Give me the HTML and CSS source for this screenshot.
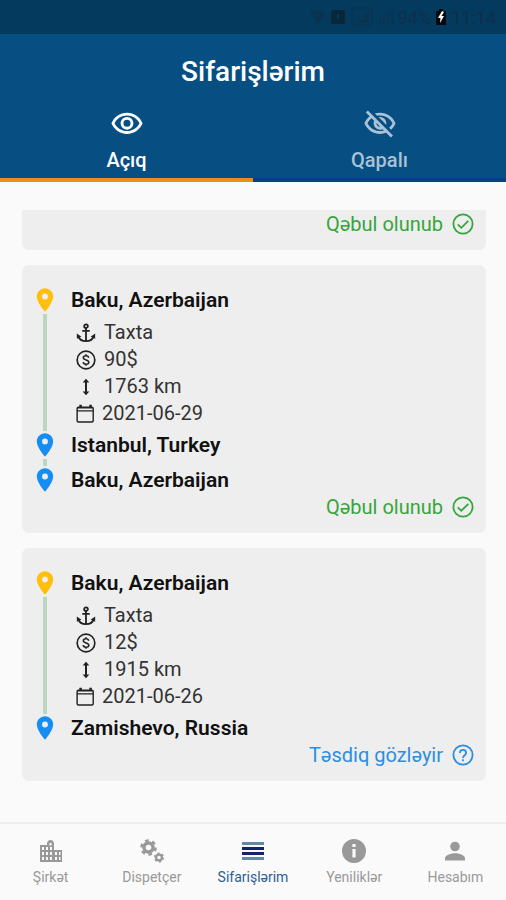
FILE: index.html
```html
<!DOCTYPE html>
<html lang="az">
<head>
<meta charset="utf-8">
<meta name="viewport" content="width=device-width, initial-scale=1">
<title>Sifarişlərim</title>
<link rel="stylesheet" href="styles.css">
</head>
<body>
<svg class="sprite" aria-hidden="true">
  <symbol id="pin" viewBox="0 0 24 24"><path d="M12 2C8.130 2 5 5.130 5 9c0 5.250 7 13 7 13s7-7.750 7-13c0-3.870-3.130-7-7-7zm0 9.500a2.500 2.500 0 0 1 0-5 2.500 2.500 0 0 1 0 5z"/></symbol>
  <symbol id="anchor" viewBox="0 0 24 24"><g fill="none" stroke="currentColor" stroke-width="2.200"><circle cx="12" cy="3.800" r="2.200"/><path d="M12 6v16M7.500 9.500h9M2.800 15.500c1 4 5 6.200 9.200 6.200s8.200-2.200 9.200-6.200"/></g><path d="M1 12.500 6.500 16.500 1 19zM23 12.500 17.500 16.500 23 19z"/></symbol>
  <symbol id="coin" viewBox="0 0 24 24"><g fill="none" stroke="currentColor"><circle cx="12" cy="12" r="10.600" stroke-width="2"/><path stroke-width="1.800" d="M12 5v2m0 10v2M15.300 9.300C15 7.800 13.700 7 12 7c-1.900 0-3.200 1-3.200 2.400 0 3.400 6.600 1.800 6.600 5.200 0 1.500-1.500 2.400-3.400 2.400-1.800 0-3.200-.9-3.400-2.500"/></g></symbol>
  <symbol id="height" viewBox="0 0 24 24"><path d="M13.200 6.500H16L12 2 8 6.500h2.800v11H8l4 4.500 4-4.500h-2.800z"/></symbol>
  <symbol id="calendar" viewBox="0 0 24 24"><path d="M4 1h3v2h9V1h3v2a2.500 2.500 0 0 1 2.500 2.500V20a2.500 2.500 0 0 1-2.500 2.500H3A2.500 2.500 0 0 1 .5 20V5.500A2.500 2.500 0 0 1 3 3h1zM2.200 9v10.500c0 .8.500 1.300 1.300 1.300h15c.8 0 1.300-.5 1.300-1.300V9zm0-3.500v2h17.600v-2z"/></symbol>
  <symbol id="check" viewBox="0 0 24 24"><g fill="none" stroke="currentColor" stroke-width="1.800"><circle cx="12" cy="12" r="9.600"/><path d="m6.800 12.300 3.500 3.500 7-7"/></g></symbol>
  <symbol id="question" viewBox="0 0 24 24"><g fill="none" stroke="currentColor" stroke-width="1.800"><circle cx="12" cy="12" r="9.600"/><path d="M8.900 10c0-1.800 1.300-3.100 3.100-3.100s3.100 1.300 3.100 3c0 2.200-3.100 2.500-3.100 5M12 16.200v2"/></g></symbol>
</svg>

<div class="statusbar">
  <svg class="st-wifi" viewBox="0 0 16 16"><path d="M8 15 0 4.500C4.500 1 11.500 1 16 4.500z"/></svg>
  <svg class="st-box" viewBox="0 0 16 16"><path fill-rule="evenodd" d="M3 1h10a2 2 0 0 1 2 2v10a2 2 0 0 1-2 2H3a2 2 0 0 1-2-2V3a2 2 0 0 1 2-2zm4 4v5h2V5z"/></svg>
  <svg class="st-sim" viewBox="0 0 24 20"><path fill="none" stroke="currentColor" d="M2 1h20v17H2z"/><path d="M19 5v11H7z"/></svg>
  <svg class="st-bars" viewBox="0 0 16 16"><path d="M1 12h2v4H1zM5 9h2v7H5zM9 5h2v11H9zM13 1h2v15h-2z"/></svg>
  <span>94%</span>
  <svg class="st-battery" viewBox="0 0 12 16"><path d="M4 0h4v2h3v14H1V2h3z"/><path fill="#fff" d="M7 2 3 9h2.500L5 14l4-7H6.500L9 3z"/></svg>
  <span>11:14</span>
</div>

<header class="header">
  <h1>Sifarişlərim</h1>
  <nav class="tabs" aria-label="Sifariş növü">
    <button class="tab active" type="button">
      <svg viewBox="0 0 24 24"><path d="M12 6c3.790 0 7.170 2.130 8.820 5.500C19.170 14.870 15.790 17 12 17s-7.170-2.130-8.820-5.500C4.830 8.130 8.210 6 12 6m0-2C7 4 2.730 7.110 1 11.500 2.730 15.890 7 19 12 19s9.270-3.110 11-7.500C21.270 7.110 17 4 12 4zm0 5a2.500 2.500 0 0 1 0 5 2.500 2.500 0 0 1 0-5m0-2c-2.480 0-4.500 2.020-4.500 4.500S9.520 16 12 16s4.500-2.020 4.500-4.500S14.480 7 12 7z"/></svg>
      <span>Açıq</span>
    </button>
    <button class="tab" type="button">
      <svg viewBox="0 0 24 24"><path d="M12 6c3.790 0 7.170 2.130 8.820 5.500-.59 1.220-1.420 2.270-2.410 3.120l1.410 1.410c1.390-1.230 2.490-2.770 3.180-4.530C21.270 7.110 17 4 12 4c-1.270 0-2.490.2-3.640.57l1.650 1.650C10.660 6.090 11.320 6 12 6zm-1.070 1.140L13 9.210c.57.25 1.030.71 1.280 1.280l2.070 2.070c.08-.34.14-.7.14-1.070C16.500 9.010 14.480 7 12 7c-.37 0-.72.05-1.070.14zM2.010 3.870l2.680 2.680C3.060 7.830 1.770 9.530 1 11.500 2.730 15.890 7 19 12 19c1.520 0 2.980-.29 4.320-.82l3.420 3.420 1.410-1.410L3.420 2.450zm7.500 7.500 2.610 2.610c-.04.01-.08.020-.12.020-1.380 0-2.500-1.120-2.500-2.500 0-.05.01-.08.010-.13zm-3.400-3.400 1.750 1.750c-.23.55-.36 1.150-.36 1.780 0 2.480 2.020 4.500 4.500 4.500.63 0 1.230-.13 1.770-.36l.98.98c-.88.24-1.800.38-2.750.38-3.790 0-7.170-2.130-8.820-5.500.7-1.430 1.720-2.610 2.930-3.530z"/></svg>
      <span>Qapalı</span>
    </button>
  </nav>
</header>

<main class="orders">
  <article class="card partial">
    <p class="status ok">Qəbul olunub <svg><use href="#check"/></svg></p>
  </article>

  <article class="card">
    <ol class="route">
      <li class="stop start">
        <div class="rail"><svg><use href="#pin"/></svg></div>
        <div class="place">
          <h2>Baku, Azerbaijan</h2>
          <ul class="details">
            <li><svg><use href="#anchor"/></svg>Taxta</li>
            <li><svg><use href="#coin"/></svg>90$</li>
            <li><svg><use href="#height"/></svg>1763 km</li>
            <li class="date"><svg><use href="#calendar"/></svg>2021-06-29</li>
          </ul>
        </div>
      </li>
      <li class="stop">
        <div class="rail"><svg><use href="#pin"/></svg></div>
        <div class="place"><h2>Istanbul, Turkey</h2></div>
      </li>
      <li class="stop">
        <div class="rail"><svg><use href="#pin"/></svg></div>
        <div class="place"><h2>Baku, Azerbaijan</h2></div>
      </li>
    </ol>
    <p class="status ok">Qəbul olunub <svg><use href="#check"/></svg></p>
  </article>

  <article class="card">
    <ol class="route">
      <li class="stop start">
        <div class="rail"><svg><use href="#pin"/></svg></div>
        <div class="place">
          <h2>Baku, Azerbaijan</h2>
          <ul class="details">
            <li><svg><use href="#anchor"/></svg>Taxta</li>
            <li><svg><use href="#coin"/></svg>12$</li>
            <li><svg><use href="#height"/></svg>1915 km</li>
            <li class="date"><svg><use href="#calendar"/></svg>2021-06-26</li>
          </ul>
        </div>
      </li>
      <li class="stop">
        <div class="rail"><svg><use href="#pin"/></svg></div>
        <div class="place"><h2>Zamishevo, Russia</h2></div>
      </li>
    </ol>
    <p class="status waiting">Təsdiq gözləyir <svg><use href="#question"/></svg></p>
  </article>
</main>

<nav class="bottombar" aria-label="Əsas menyu">
  <a href="#sirket">
    <svg viewBox="0 0 24 24"><path fill-rule="evenodd" d="M1 6h7V4.500C8 2.500 9.700 1 11.500 1S15 2.500 15 4.500V11h8v12H1zm2 2v3h2V8zm4 0v3h2V8zm3.500-4v2.500h2V4zm.5 4v3h2V8zm-8 5v3h2v-3zm4 0v3h2v-3zm4 0v3h2v-3zm5 0v3h2v-3zm4 0v3h1.500v-3zM3 18v3h2v-3zm4 0v3h2v-3zm4 0v3h2v-3zm5 0v3h2v-3zm4 0v3h1.500v-3z"/></svg>
    Şirkət
  </a>
  <a href="#dispetcer">
    <svg viewBox="0 0 24 24"><g fill="none" stroke="currentColor"><circle cx="8.500" cy="8.500" r="4.500" stroke-width="3.400"/><circle cx="8.500" cy="8.500" r="7" stroke-width="2.600" stroke-dasharray="3.670 3.660"/><circle cx="19" cy="18.500" r="2.900" stroke-width="2.200"/><circle cx="19" cy="18.500" r="4.300" stroke-width="1.600" stroke-dasharray="2.250 2.250"/></g></svg>
    Dispetçer
  </a>
  <a class="active" href="#sifarisler" aria-current="page">
    <svg viewBox="0 0 24 24"><path fill="#6488aa" d="M1 3h22v3H1zM1 18h22v3H1z"/><path fill="#14226e" d="M1 8h22v3H1zM1 13h22v3H1z"/></svg>
    Sifarişlərim
  </a>
  <a href="#yenilikler">
    <svg viewBox="0 0 24 24"><path fill-rule="evenodd" d="M12 0a12 12 0 1 0 0 24 12 12 0 0 0 0-24zm-1.600 5h3.200v3h-3.200zm0 5h3.200v8.500h-3.200z"/></svg>
    Yeniliklər
  </a>
  <a href="#hesabim">
    <svg viewBox="0 0 24 24"><circle cx="12" cy="7.500" r="4.800"/><path d="M2 21.500v-2.300c0-3.300 6.700-5 10-5s10 1.700 10 5v2.300z"/></svg>
    Hesabım
  </a>
</nav>
</body>
</html>
```

FILE: styles.css
```css
* { box-sizing: border-box; }

body {
  margin: 0;
  min-height: 100vh;
  display: flex;
  flex-direction: column;
  background: #fafafa;
  color: #111;
  font-family: Roboto, "Noto Sans", sans-serif;
}

h1, h2, p, ol, ul { margin: 0; padding: 0; }
ol, ul { list-style: none; }
svg { fill: currentColor; flex: none; }
.sprite { display: none; }

.statusbar {
  height: 34px;
  padding-right: 10px;
  display: flex;
  align-items: center;
  justify-content: flex-end;
  gap: 4px;
  background: #053a5f;
  color: #0c304b;
  font-size: 18px;
}
.st-wifi, .st-box, .st-bars { width: 16px; height: 16px; }
.st-wifi, .st-sim, .st-bars { color: #09334f; }
.st-box { color: #0a2739; }
.st-sim { width: 24px; height: 20px; }
.st-battery { width: 12px; height: 16px; color: #020a10; }

.header {
  background: #074e82;
  color: #fff;
  text-align: center;
}
.header h1 {
  padding-top: 21px;
  font-size: 28px;
  line-height: 34px;
  font-weight: 500;
}
.tabs { display: flex; padding-top: 18px; }
.tab {
  flex: 1;
  padding: 0 0 6px;
  border: 0;
  border-bottom: 4px solid #0a3f80;
  background: none;
  color: #a9c2d6;
  font: 500 20px/24px Roboto, "Noto Sans", sans-serif;
  display: flex;
  flex-direction: column;
  align-items: center;
  gap: 7px;
}
.tab svg { width: 34px; height: 34px; }
.tab.active { color: #fff; border-bottom-color: #ef8c17; }

.orders {
  flex: 1;
  padding: 28px 20px 28px 22px;
  display: flex;
  flex-direction: column;
  gap: 15px;
}
.card {
  padding: 21px 11px 16px 9px;
  border-radius: 7px;
  background: #eee;
}
.card.partial {
  padding-top: 4px;
  border-radius: 0 0 7px 7px;
}

.stop { display: flex; gap: 12px; min-height: 35px; }
.stop:last-child { min-height: 31px; }
.rail {
  width: 28px;
  display: flex;
  flex-direction: column;
  align-items: center;
  color: #168df2;
}
.start .rail { color: #ffbf0b; }
.rail svg { width: 28px; height: 28px; }
.stop:not(:last-child) .rail::after {
  content: "";
  flex: 1;
  width: 4px;
  background: #bbd8bc;
}
.place h2 { font-size: 21px; line-height: 28px; font-weight: 600; }

.details { padding: 5px 0 4px 5px; }
.details li {
  display: flex;
  align-items: center;
  gap: 8px;
  font-size: 20px;
  line-height: 27px;
  color: #333;
}
.details .date { gap: 6px; }
.details svg { width: 20px; height: 20px; color: #222; }

.status {
  display: flex;
  align-items: center;
  justify-content: flex-end;
  gap: 8px;
  font-size: 20px;
  line-height: 20px;
}
.status svg { width: 24px; height: 24px; margin: -2px 0; }
.status.ok { color: #35a63b; }
.status.waiting { color: #2b8ee3; }

.bottombar {
  height: 78px;
  border-top: 2px solid #eee;
  display: flex;
}
.bottombar a {
  flex: 1;
  padding-top: 15px;
  display: flex;
  flex-direction: column;
  align-items: center;
  gap: 6px;
  color: #999;
  font-size: 14px;
  line-height: 16px;
  text-decoration: none;
}
.bottombar svg { width: 24px; height: 24px; }
.bottombar .active { color: #2c5f91; }
```
